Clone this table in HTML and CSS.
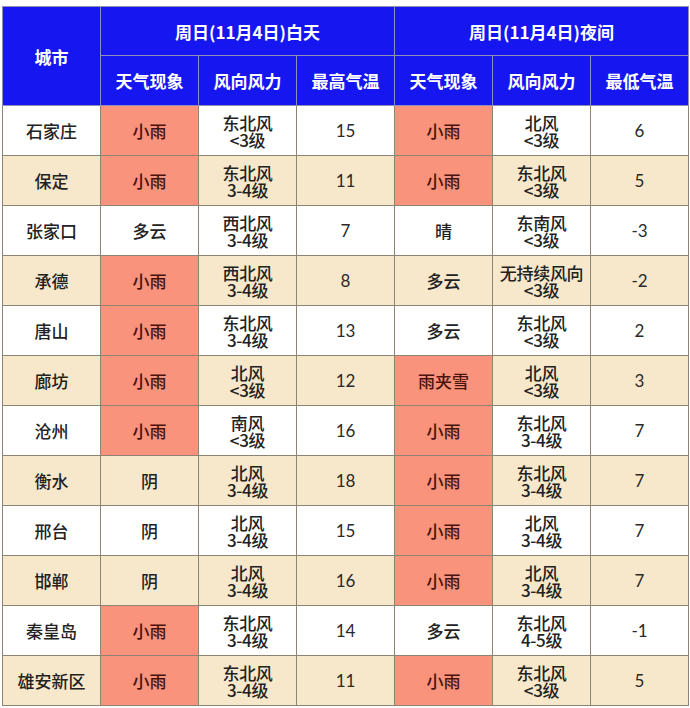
FILE: index.html
```html
<!DOCTYPE html>
<html lang="zh">
<head>
<meta charset="utf-8">
<link rel="stylesheet" href="styles.css">
</head>
<body>
<table class="wx">
  <colgroup>
    <col><col><col><col><col><col><col>
  </colgroup>
  <thead>
    <tr class="h1">
      <th rowspan="2" class="city-h">城市</th>
      <th colspan="3">周日(11月4日)白天</th>
      <th colspan="3">周日(11月4日)夜间</th>
    </tr>
    <tr class="h2">
      <th>天气现象</th><th>风向风力</th><th>最高气温</th>
      <th>天气现象</th><th>风向风力</th><th>最低气温</th>
    </tr>
  </thead>
  <tbody>
    <tr><td class="city">石家庄</td><td class="wt rain">小雨</td><td class="wind">东北风<br>&lt;3级</td><td class="num">15</td><td class="wt rain">小雨</td><td class="wind">北风<br>&lt;3级</td><td class="num">6</td></tr>
    <tr class="alt"><td class="city">保定</td><td class="wt rain">小雨</td><td class="wind">东北风<br>3-4级</td><td class="num">11</td><td class="wt rain">小雨</td><td class="wind">东北风<br>&lt;3级</td><td class="num">5</td></tr>
    <tr><td class="city">张家口</td><td class="wt">多云</td><td class="wind">西北风<br>3-4级</td><td class="num">7</td><td class="wt">晴</td><td class="wind">东南风<br>&lt;3级</td><td class="num">-3</td></tr>
    <tr class="alt"><td class="city">承德</td><td class="wt rain">小雨</td><td class="wind">西北风<br>3-4级</td><td class="num">8</td><td class="wt">多云</td><td class="wind">无持续风向<br>&lt;3级</td><td class="num">-2</td></tr>
    <tr><td class="city">唐山</td><td class="wt rain">小雨</td><td class="wind">东北风<br>3-4级</td><td class="num">13</td><td class="wt">多云</td><td class="wind">东北风<br>&lt;3级</td><td class="num">2</td></tr>
    <tr class="alt"><td class="city">廊坊</td><td class="wt rain">小雨</td><td class="wind">北风<br>&lt;3级</td><td class="num">12</td><td class="wt rain">雨夹雪</td><td class="wind">北风<br>&lt;3级</td><td class="num">3</td></tr>
    <tr><td class="city">沧州</td><td class="wt rain">小雨</td><td class="wind">南风<br>&lt;3级</td><td class="num">16</td><td class="wt rain">小雨</td><td class="wind">东北风<br>3-4级</td><td class="num">7</td></tr>
    <tr class="alt"><td class="city">衡水</td><td class="wt">阴</td><td class="wind">北风<br>3-4级</td><td class="num">18</td><td class="wt rain">小雨</td><td class="wind">东北风<br>3-4级</td><td class="num">7</td></tr>
    <tr><td class="city">邢台</td><td class="wt">阴</td><td class="wind">北风<br>3-4级</td><td class="num">15</td><td class="wt rain">小雨</td><td class="wind">北风<br>3-4级</td><td class="num">7</td></tr>
    <tr class="alt"><td class="city">邯郸</td><td class="wt">阴</td><td class="wind">北风<br>3-4级</td><td class="num">16</td><td class="wt rain">小雨</td><td class="wind">北风<br>3-4级</td><td class="num">7</td></tr>
    <tr><td class="city">秦皇岛</td><td class="wt rain">小雨</td><td class="wind">东北风<br>3-4级</td><td class="num">14</td><td class="wt">多云</td><td class="wind">东北风<br>4-5级</td><td class="num">-1</td></tr>
    <tr class="alt"><td class="city">雄安新区</td><td class="wt rain">小雨</td><td class="wind">东北风<br>3-4级</td><td class="num">11</td><td class="wt rain">小雨</td><td class="wind">东北风<br>&lt;3级</td><td class="num">5</td></tr>
  </tbody>
</table>
</body>
</html>
```

FILE: styles.css
```css
html, body {
  margin: 0;
  padding: 0;
  background: #ffffff;
}
body {
  padding: 6px 0 0 2px;
  font-family: "Noto Sans CJK SC", "Noto Sans", sans-serif;
}
.wx {
  border-collapse: collapse;
  table-layout: fixed;
  width: 686px;
}
.wx col {
  width: 98px;
}
.wx th {
  background: #1616f0;
  color: #ffffff;
  font-weight: 700;
  font-size: 17px;
  border: 1px solid #8f8fb8;
  padding: 0;
  text-align: center;
  vertical-align: middle;
}
.h1 th {
  height: 48px;
}
.h2 th {
  height: 49px;
}
.wx td {
  height: 49px;
  padding: 0;
  border: 1px solid #8e8474;
  text-align: center;
  vertical-align: middle;
  color: #222222;
  background: #ffffff;
}
.wx tr.alt td {
  background: #f7e8cb;
}
.wx td.city {
  font-size: 17px;
  font-weight: 500;
}
.wx td.wt {
  font-size: 17px;
  font-weight: 500;
}
.wx td.rain,
.wx tr.alt td.rain {
  background: #f9937b;
  color: #4a120c;
}
.wx td.wind {
  font-size: 17px;
  line-height: 17px;
  font-weight: 500;
  letter-spacing: -0.3px;
}
.wx td.num {
  font-family: "Lato", "Open Sans", sans-serif;
  font-size: 17px;
  color: #2a2a2a;
}
```
